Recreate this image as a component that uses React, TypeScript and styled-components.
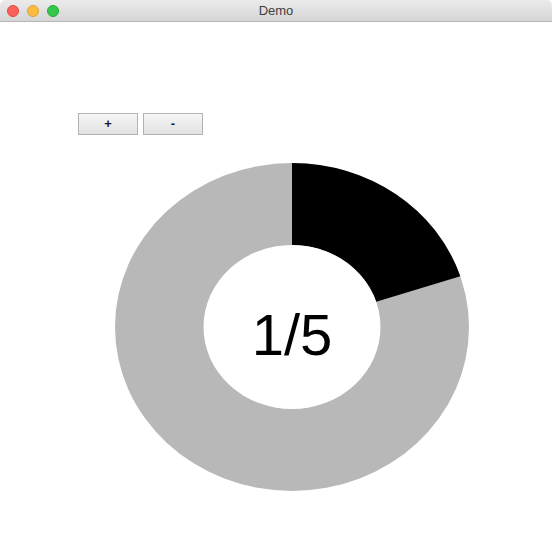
import { useState } from "react";
import styled, { createGlobalStyle } from "styled-components";

const GlobalStyle = createGlobalStyle`
  html, body {
    margin: 0;
    padding: 0;
    background: #ffffff;
    font-family: "Liberation Sans", Arial, sans-serif;
  }
`;

const Window = styled.div`
  width: 552px;
  height: 546px;
  background: #ffffff;
  overflow: hidden;
`;

const TitleBar = styled.div`
  position: relative;
  height: 21px;
  display: flex;
  align-items: center;
  justify-content: center;
  background: linear-gradient(to bottom, #ebebeb, #d5d5d5);
  border-bottom: 1px solid #b4b4b4;
  border-radius: 5px 5px 0 0;
`;

const Lights = styled.div`
  position: absolute;
  left: 7px;
  top: 5px;
  display: flex;
  gap: 8px;
`;

const Light = styled.span<{ color: string; edge: string }>`
  width: 12px;
  height: 12px;
  border-radius: 50%;
  box-sizing: border-box;
  background: ${(p) => p.color};
  border: 0.5px solid ${(p) => p.edge};
`;

const Title = styled.span`
  font-size: 13px;
  color: #3f3f3f;
`;

const Content = styled.div`
  padding: 91px 0 0 78px;
`;

const Toolbar = styled.div`
  display: flex;
  gap: 5px;
`;

const Button = styled.button`
  width: 60px;
  height: 22px;
  padding: 0;
  border: 1px solid #b2b2b2;
  border-radius: 0;
  background: linear-gradient(to bottom, #f6f6f6, #e2e2e2);
  font-family: "Liberation Sans", Arial, sans-serif;
  font-size: 13px;
  font-weight: bold;
  color: #1a1a3a;
  line-height: 20px;
  cursor: pointer;
`;

const Chart = styled.div`
  position: relative;
  width: 354px;
  height: 328px;
  margin: 28px 0 0 37px;
`;

const Donut = styled.svg`
  display: block;
  width: 100%;
  height: 100%;
`;

const Label = styled.div`
  position: absolute;
  inset: 0;
  display: flex;
  align-items: center;
  justify-content: center;
  padding-top: 14px;
  box-sizing: border-box;
  font-size: 58px;
  color: #000000;
  pointer-events: none;
`;

const arc = (from: number, to: number, r1: number, r2: number) => {
  const pt = (a: number, r: number) =>
    `${(r * Math.sin(a)).toFixed(5)} ${(-r * Math.cos(a)).toFixed(5)}`;
  const large = to - from > Math.PI ? 1 : 0;
  return [
    `M ${pt(from, r1)}`,
    `A ${r1} ${r1} 0 ${large} 1 ${pt(to, r1)}`,
    `L ${pt(to, r2)}`,
    `A ${r2} ${r2} 0 ${large} 0 ${pt(from, r2)}`,
    "Z",
  ].join(" ");
};

const TOTAL = 5;

export default function App() {
  const [count, setCount] = useState(1);
  const frac = count / TOTAL;
  const end = Math.min(frac, 0.9999) * Math.PI * 2;

  return (
    <>
      <GlobalStyle />
      <Window>
        <TitleBar>
          <Lights>
            <Light color="#fc605b" edge="#de4a45" />
            <Light color="#fdbc40" edge="#dea034" />
            <Light color="#34c84a" edge="#27a93a" />
          </Lights>
          <Title>Demo</Title>
        </TitleBar>
        <Content>
          <Toolbar>
            <Button onClick={() => setCount((c) => Math.min(TOTAL, c + 1))}>+</Button>
            <Button onClick={() => setCount((c) => Math.max(0, c - 1))}>-</Button>
          </Toolbar>
          <Chart>
            <Donut viewBox="-1 -1 2 2" preserveAspectRatio="none">
              <ellipse cx="0" cy="0" rx="1" ry="1" fill="#b8b8b8" />
              {count > 0 && <path d={arc(0, end, 1, 0.5)} fill="#000000" />}
              <circle cx="0" cy="0" r="0.5" fill="#ffffff" />
            </Donut>
            <Label>
              {count}/{TOTAL}
            </Label>
          </Chart>
        </Content>
      </Window>
    </>
  );
}
